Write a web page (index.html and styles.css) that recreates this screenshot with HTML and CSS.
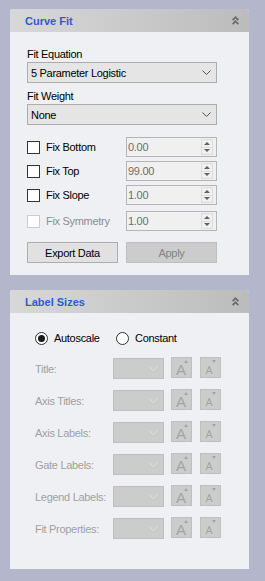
FILE: index.html
```html
<!DOCTYPE html>
<html lang="en">
<head>
    <meta charset="UTF-8">
    <meta name="viewport" content="width=device-width, initial-scale=1.0">
    <title>Curve Fit</title>
    <link rel="stylesheet" href="styles.css">
</head>
<body>
    <div class="panel panel-fit">
        <div class="panel-head">
            <span class="panel-title">Curve Fit</span>
            <svg class="collapse" width="7" height="9" viewBox="0 0 7 9"><path d="M0.6 4.2 L3.5 1.3 L6.4 4.2 M0.6 8.2 L3.5 5.3 L6.4 8.2" fill="none" stroke="#6b6b6b" stroke-width="1.7"/></svg>
        </div>
        <div class="panel-body fit-body">
            <div class="field-label">Fit Equation</div>
            <div class="select">
                <span>5 Parameter Logistic</span>
                <svg width="9" height="5" viewBox="0 0 9 5"><path d="M0.5 0.5 L4.5 4.5 L8.5 0.5" fill="none" stroke="#555" stroke-width="1"/></svg>
            </div>
            <div class="field-label second">Fit Weight</div>
            <div class="select">
                <span>None</span>
                <svg width="9" height="5" viewBox="0 0 9 5"><path d="M0.5 0.5 L4.5 4.5 L8.5 0.5" fill="none" stroke="#555" stroke-width="1"/></svg>
            </div>

            <div class="fix-list">
                <div class="fix-row">
                    <label class="check"><span class="box"></span>Fix Bottom</label>
                    <div class="spin"><span>0.00</span><span class="spin-btns"><i class="up"></i><i class="down"></i></span></div>
                </div>
                <div class="fix-row">
                    <label class="check"><span class="box"></span>Fix Top</label>
                    <div class="spin"><span>99.00</span><span class="spin-btns"><i class="up"></i><i class="down"></i></span></div>
                </div>
                <div class="fix-row">
                    <label class="check"><span class="box"></span>Fix Slope</label>
                    <div class="spin"><span>1.00</span><span class="spin-btns"><i class="up"></i><i class="down"></i></span></div>
                </div>
                <div class="fix-row last">
                    <label class="check disabled"><span class="box"></span>Fix Symmetry</label>
                    <div class="spin"><span>1.00</span><span class="spin-btns"><i class="up"></i><i class="down"></i></span></div>
                </div>
            </div>

            <div class="actions">
                <button class="btn">Export Data</button>
                <button class="btn btn-disabled">Apply</button>
            </div>
        </div>
    </div>

    <div class="panel panel-sizes">
        <div class="panel-head">
            <span class="panel-title">Label Sizes</span>
            <svg class="collapse" width="7" height="9" viewBox="0 0 7 9"><path d="M0.6 4.2 L3.5 1.3 L6.4 4.2 M0.6 8.2 L3.5 5.3 L6.4 8.2" fill="none" stroke="#6b6b6b" stroke-width="1.7"/></svg>
        </div>
        <div class="panel-body sizes-body">
            <div class="radio-row">
                <label class="radio-opt"><span class="radio checked"></span>Autoscale</label>
                <label class="radio-opt"><span class="radio"></span>Constant</label>
            </div>

            <div class="size-list">
                <div class="size-row">
                    <span class="size-label">Title:</span>
                    <div class="combo"><svg width="9" height="5" viewBox="0 0 9 5"><path d="M0.5 0.5 L4.5 4.5 L8.5 0.5" fill="none" stroke="#e2e2e2" stroke-width="1"/></svg></div>
                    <div class="size-btn grow"><span class="a">A</span><i class="tri-up"></i></div>
                    <div class="size-btn shrink"><span class="a">A</span><i class="tri-down"></i></div>
                </div>
                <div class="size-row">
                    <span class="size-label">Axis Titles:</span>
                    <div class="combo"><svg width="9" height="5" viewBox="0 0 9 5"><path d="M0.5 0.5 L4.5 4.5 L8.5 0.5" fill="none" stroke="#e2e2e2" stroke-width="1"/></svg></div>
                    <div class="size-btn grow"><span class="a">A</span><i class="tri-up"></i></div>
                    <div class="size-btn shrink"><span class="a">A</span><i class="tri-down"></i></div>
                </div>
                <div class="size-row">
                    <span class="size-label">Axis Labels:</span>
                    <div class="combo"><svg width="9" height="5" viewBox="0 0 9 5"><path d="M0.5 0.5 L4.5 4.5 L8.5 0.5" fill="none" stroke="#e2e2e2" stroke-width="1"/></svg></div>
                    <div class="size-btn grow"><span class="a">A</span><i class="tri-up"></i></div>
                    <div class="size-btn shrink"><span class="a">A</span><i class="tri-down"></i></div>
                </div>
                <div class="size-row">
                    <span class="size-label">Gate Labels:</span>
                    <div class="combo"><svg width="9" height="5" viewBox="0 0 9 5"><path d="M0.5 0.5 L4.5 4.5 L8.5 0.5" fill="none" stroke="#e2e2e2" stroke-width="1"/></svg></div>
                    <div class="size-btn grow"><span class="a">A</span><i class="tri-up"></i></div>
                    <div class="size-btn shrink"><span class="a">A</span><i class="tri-down"></i></div>
                </div>
                <div class="size-row">
                    <span class="size-label">Legend Labels:</span>
                    <div class="combo"><svg width="9" height="5" viewBox="0 0 9 5"><path d="M0.5 0.5 L4.5 4.5 L8.5 0.5" fill="none" stroke="#e2e2e2" stroke-width="1"/></svg></div>
                    <div class="size-btn grow"><span class="a">A</span><i class="tri-up"></i></div>
                    <div class="size-btn shrink"><span class="a">A</span><i class="tri-down"></i></div>
                </div>
                <div class="size-row">
                    <span class="size-label">Fit Properties:</span>
                    <div class="combo"><svg width="9" height="5" viewBox="0 0 9 5"><path d="M0.5 0.5 L4.5 4.5 L8.5 0.5" fill="none" stroke="#e2e2e2" stroke-width="1"/></svg></div>
                    <div class="size-btn grow"><span class="a">A</span><i class="tri-up"></i></div>
                    <div class="size-btn shrink"><span class="a">A</span><i class="tri-down"></i></div>
                </div>
            </div>
        </div>
    </div>
</body>
</html>
```

FILE: styles.css
```css
body {
    margin: 0;
    padding: 9px 0 0 10px;
    background: #b4b6cb;
    font-family: "Liberation Sans", Arial, sans-serif;
    font-size: 11px;
    letter-spacing: -0.3px;
    color: #000;
}
.panel {
    width: 239px;
    background: #eff0f4;
    border-radius: 3px 3px 0 0;
}
.panel-sizes {
    margin-top: 15px;
}
.panel-head {
    height: 23px;
    display: flex;
    align-items: center;
    justify-content: space-between;
    padding: 0 10px 0 15px;
    background: linear-gradient(to right, #d8d8d8, #bcbcbc);
    border-radius: 3px 3px 0 0;
}
.panel-title {
    font-weight: bold;
    color: #2c5ccf;
    letter-spacing: 0;
    margin-top: 1px;
}
.collapse {
    display: block;
}

/* curve fit */
.fit-body {
    padding: 15px 32px 12px 17px;
}
.field-label {
    line-height: 15px;
}
.field-label.second {
    margin-top: 6px;
}
.select {
    height: 21px;
    box-sizing: border-box;
    border: 1px solid #adadad;
    background: #e5e5e5;
    display: flex;
    align-items: center;
    justify-content: space-between;
    padding: 0 5px 0 3px;
}
.select svg {
    display: block;
}
.fix-list {
    margin-top: 12px;
    display: flex;
    flex-direction: column;
    gap: 4px;
}
.fix-row {
    height: 20px;
    display: flex;
    align-items: center;
    justify-content: space-between;
}
.fix-row.last {
    margin-top: 2px;
}
.check {
    display: flex;
    align-items: center;
    gap: 6px;
}
.box {
    width: 13px;
    height: 13px;
    box-sizing: border-box;
    border: 1px solid #333;
    background: #fff;
}
.check.disabled {
    color: #8d8d8d;
}
.check.disabled .box {
    border-color: #cccccc;
}
.spin {
    width: 91px;
    height: 20px;
    box-sizing: border-box;
    border: 1px solid #b5b5b5;
    background: #f0f0f0;
    color: #6d6d6d;
    display: flex;
    align-items: center;
    justify-content: space-between;
    padding: 0 3px 0 1px;
}
.spin-btns {
    width: 12px;
    height: 16px;
    display: flex;
    flex-direction: column;
}
.spin-btns i {
    flex: 1;
    display: flex;
    align-items: center;
    justify-content: center;
    border: 1px solid #dcdcdc;
    background: #f0f0f0;
}
.spin-btns i + i {
    border-top: none;
}
.spin-btns i::after {
    content: "";
    border-left: 3px solid transparent;
    border-right: 3px solid transparent;
}
.spin-btns .up::after {
    border-bottom: 3px solid #606060;
}
.spin-btns .down::after {
    border-top: 3px solid #606060;
}
.actions {
    margin-top: 11px;
    display: flex;
    justify-content: space-between;
}
.btn {
    width: 91px;
    height: 21px;
    padding: 0;
    border: 1px solid #adadad;
    background: #e1e1e1;
    font-family: inherit;
    font-size: 11px;
    letter-spacing: -0.3px;
    color: #000;
}
.btn-disabled {
    background: #cccccc;
    border-color: #bfbfbf;
    color: #838383;
}

/* label sizes */
.sizes-body {
    padding: 18px 0 30px 25px;
}
.radio-row {
    height: 14px;
    display: flex;
    align-items: center;
}
.radio-opt {
    width: 81px;
    display: flex;
    align-items: center;
    gap: 6px;
}
.radio {
    width: 13px;
    height: 13px;
    box-sizing: border-box;
    border: 1px solid #333;
    border-radius: 50%;
    background: #fff;
    display: flex;
    align-items: center;
    justify-content: center;
}
.radio.checked::after {
    content: "";
    width: 7px;
    height: 7px;
    border-radius: 50%;
    background: #1a1a1a;
}
.size-list {
    margin-top: 12px;
    display: flex;
    flex-direction: column;
    gap: 10px;
}
.size-row {
    height: 22px;
    display: flex;
    align-items: flex-start;
    color: #a0a0a0;
}
.size-label {
    width: 78px;
    line-height: 22px;
    margin-top: 1px;
}
.combo {
    width: 51px;
    height: 21px;
    margin-top: 1px;
    box-sizing: border-box;
    border: 1px solid #bfbfbf;
    background: #cccccc;
    display: flex;
    align-items: center;
    justify-content: flex-end;
    padding-right: 5px;
}
.combo svg {
    display: block;
}
.size-btn {
    width: 21px;
    height: 21px;
    box-sizing: border-box;
    border: 1px solid #bfbfbf;
    background: #cccccc;
    display: flex;
    justify-content: center;
    align-items: flex-start;
}
.grow {
    margin-left: 7px;
}
.shrink {
    margin-left: 8px;
}
.size-btn .a {
    letter-spacing: 0;
    color: #a3a3a3;
}
.grow .a {
    font-size: 15px;
    line-height: 15px;
    margin-top: 4px;
    margin-left: 1px;
}
.shrink .a {
    font-size: 10px;
    line-height: 10px;
    margin-top: 8px;
    margin-left: 1px;
}
.size-btn i {
    margin-top: 2px;
    border-left: 2px solid transparent;
    border-right: 2px solid transparent;
}
.tri-up {
    margin-left: -2px;
    border-bottom: 3px solid #a3a3a3;
}
.tri-down {
    margin-left: 0;
    border-top: 3px solid #a3a3a3;
}
```
